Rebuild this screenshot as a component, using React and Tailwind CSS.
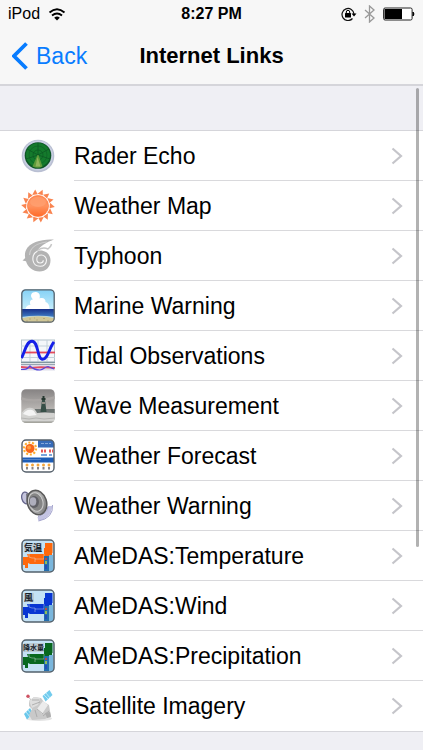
import React from 'react';

const RAYS = [0, 1, 2, 3, 4, 5, 6, 7, 8, 9, 10, 11, 12, 13];

function IconFrame({ children }) {
  return (
    <svg viewBox="0 0 34 34" className="h-[34px] w-[34px] shrink-0" aria-hidden="true">
      {children}
    </svg>
  );
}

function RadarIcon() {
  return (
    <IconFrame>
      <circle cx="17" cy="17" r="16.3" fill="#b9bfd2" />
      <circle cx="17" cy="16.6" r="15" fill="#c9cfe2" />
      <circle cx="17" cy="16.5" r="13.3" fill="#0d5526" />
      <circle cx="17" cy="16" r="12" fill="#147a2c" />
      <path d="M17 16 6 10M17 16l11-6M17 16V4M17 16 5 20M17 16l12 4" stroke="#0b5522" strokeWidth="0.7" />
      <circle cx="17" cy="16" r="5" fill="none" stroke="#0b5a22" strokeWidth="0.7" />
      <circle cx="17" cy="16" r="9" fill="none" stroke="#0b5a22" strokeWidth="0.5" />
      <path d="m16.500 16-5 11.500Q17 30 21.500 27.500L17.500 16Z" fill="#5f9a3a" />
      <path d="m16.500 18-2 9.500h5Z" fill="#8fb45c" />
    </IconFrame>
  );
}

function SunIcon() {
  return (
    <IconFrame>
      <defs>
        <linearGradient id="sun" x1="0" y1="0" x2="0" y2="1">
          <stop offset="0" stopColor="#ff8a55" />
          <stop offset="0.5" stopColor="#ff935f" />
          <stop offset="1" stopColor="#ff6a28" />
        </linearGradient>
      </defs>
      {RAYS.map((n) => (
        <path key={n} d="M14 5 18.200.2 19.500 5.500Z" fill="#f98450" transform={`rotate(${n * 25.714 + 12} 17 17)`} />
      ))}
      <circle cx="17" cy="17" r="10.6" fill="url(#sun)" stroke="#ff7438" strokeWidth="0.6" />
      <ellipse cx="17" cy="13" rx="8" ry="5" fill="#ffae85" opacity="0.4" />
    </IconFrame>
  );
}

function TyphoonIcon() {
  return (
    <IconFrame>
      <path
        d="M33 .5C23 .5 12 2 6.500 8.500 4 12 3.500 15.500 4.200 19L1.500 21.500l3.500.8C6.500 28 12 32.500 18.500 32.500 25 32.500 29.500 28 29.500 21.500c0-3.500-1.500-6.500-4.500-8.500-2.500-1.600-5.500-2-8.500-1.200C19 7 25 3.500 33 .5Z"
        fill="#b3b3b3"
      />
      <path d="M26 3C17 4 9 8 8.500 16" fill="none" stroke="#cfcfcf" strokeWidth="1.200" />
      <path d="M17 11c3-2 7-2.500 10-1 3-2 3-3 3.500-5" fill="none" stroke="#c6c6c6" strokeWidth="1.500" />
      <path
        d="M16.500 12C12.500 14 11.500 18 12 21.500c.7 3.700 3.800 5.800 7.200 5.800 3.800 0 6.300-2.700 6.300-6 0-3-2.300-5.300-5.200-5.300-2.600 0-4.500 1.900-4.500 4.300 0 2.200 1.500 3.700 3.500 3.700 1.800 0 3-1.200 3-2.700"
        fill="none"
        stroke="#f6f6f6"
        strokeWidth="1.100"
      />
    </IconFrame>
  );
}

function MarineIcon() {
  return (
    <IconFrame>
      <defs>
        <clipPath id="marine"><rect x="0.500" y="0.500" width="33" height="33" rx="4" /></clipPath>
        <linearGradient id="sky" x1="0" y1="0" x2="0" y2="1">
          <stop offset="0" stopColor="#82d0f5" />
          <stop offset="1" stopColor="#c8effc" />
        </linearGradient>
        <linearGradient id="sea" x1="0" y1="0" x2="0" y2="1">
          <stop offset="0" stopColor="#17308a" />
          <stop offset="1" stopColor="#3f7cc4" />
        </linearGradient>
      </defs>
      <g clipPath="url(#marine)">
        <rect width="34" height="21" fill="url(#sky)" />
        <path d="M4.500 20c.5-3 3-4.500 5-4C8 12 10 10.500 12 10.500 7.500 6 11.500 2 16 3.200c3.500 1 3 5 2.500 6.300 3.500-1.500 6.500.5 6 3.500 2.500.5 4 3 4 7Z" fill="#fff" />
        <rect y="20" width="34" height="8" fill="url(#sea)" />
        <path d="M0 28q17-2.500 34 0v3H0Z" fill="#b8dbe8" />
        <path d="M0 29.500q17-4.500 34 0V34H0Z" fill="#d0c797" />
        <path d="M8 30h2M15 31h2M22 29.500h2M13 29h1M26 32h2M5 32h2" stroke="#b5a878" />
      </g>
      <rect x="0.800" y="0.800" width="32.400" height="32.400" rx="4" fill="none" stroke="#56616b" strokeWidth="1.300" />
    </IconFrame>
  );
}

function TidalIcon() {
  return (
    <IconFrame>
      <rect x="0.500" y="1" width="33" height="22" fill="#f4f7fa" stroke="#b4c3cc" />
      <path d="M9 1v22M17 1v22M26 1v22M0 7h34M0 18.500h34" stroke="#c3d1da" />
      <path d="M0 23.500h34" stroke="#7f959f" strokeWidth="1.300" />
      <path d="M4 13.500h30" stroke="#e3495c" strokeWidth="1.800" />
      <rect y="25" width="34" height="6.500" fill="#dedeea" />
      <path d="M0 25.500h34" stroke="#97a5b0" />
      <path d="m0 28 10 .8 10-.6 14 .6" fill="none" stroke="#e34d63" strokeWidth="1.800" />
      <path d="M0 30.500c4 0 6 0 9-3.500 3 3 6 4 10 4 4-.5 5-3.500 8-3.500l6 2.500" fill="none" stroke="#5546dc" strokeWidth="1.200" />
      <path d="M.5 19C3.500 14 5 2.200 11 2.200c6.500 0 5 18 10.500 18C27 20.200 28 9 33 3" fill="none" stroke="#1520e8" strokeWidth="2.900" />
    </IconFrame>
  );
}

function WaveIcon() {
  return (
    <IconFrame>
      <defs>
        <clipPath id="wave"><rect x="0.300" y="0.300" width="33.400" height="33.400" rx="4.500" /></clipPath>
        <linearGradient id="storm" x1="0" y1="0" x2="0" y2="1">
          <stop offset="0" stopColor="#858282" />
          <stop offset="0.6" stopColor="#b9b6b3" />
          <stop offset="1" stopColor="#a8a8a6" />
        </linearGradient>
      </defs>
      <g clipPath="url(#wave)">
        <rect width="34" height="34" fill="url(#storm)" />
        <path d="M0 8q12 5 34-1v3q-20 5-34 1Z" fill="#aaa6a4" />
        <path d="M14 20h20v5H12Z" fill="#6a7270" />
        <path d="m21 11-1.500 12h6L24 11Z" fill="#364f47" />
        <path d="M20.500 9h4v2h-4zM21.500 7h2v2h-2z" fill="#25372f" />
        <path d="M21 13h3v2h-3z" fill="#8f8e86" />
        <path d="M0 24c2-1 3-4 7-5 3-1 6 0 8 3l1 2 8-.5 10 .5v10H0Z" fill="#d2d2d0" />
        <path d="M2 25c2-3 5-5 9-4 3 1 3 4 5 5l-8 1Z" fill="#f4f4f4" />
        <path d="m0 29 8 1 7-1 8 1 11-1" fill="none" stroke="#b5b5b3" />
        <path d="M0 33.500h34" stroke="#96968f" strokeWidth="2" />
      </g>
    </IconFrame>
  );
}

function ForecastIcon() {
  return (
    <IconFrame>
      <rect x="1" y="1" width="32" height="32" rx="4" fill="#fff" />
      <path d="M17 1h12q4 0 4 4v3.500H17Z" fill="#376bb8" />
      <path d="M20 4.500h10" stroke="#86a8db" strokeDasharray="3 1" />
      <circle cx="9" cy="9.500" r="6" fill="none" stroke="#ffae2e" strokeWidth="2.200" strokeDasharray="2 1.700" />
      <circle cx="9" cy="9.500" r="4.500" fill="#f86518" />
      <circle cx="8" cy="8.500" r="2" fill="#ff9c42" />
      <path d="M20 12h6M28 12h4" stroke="#e85858" strokeWidth="3" strokeDasharray="2 1" />
      <path d="M20 16h6M28 16h3" stroke="#7aa4db" strokeWidth="2" />
      <rect x="1" y="18.500" width="32" height="5" fill="#1e5db5" />
      <path d="M2 20.500h18" stroke="#5484c8" />
      {[6, 11.5, 17, 22.5, 28].map((x) => (
        <g key={x}>
          <circle cx={x} cy="26" r="1.500" fill="#f5a63b" />
          <path d={`M${x} 28v2.500`} stroke="#8a8382" strokeWidth="2" />
        </g>
      ))}
      <rect x="1" y="1" width="32" height="32" rx="4" fill="none" stroke="#55606b" strokeWidth="1.400" />
    </IconFrame>
  );
}

function SpeakerIcon() {
  return (
    <IconFrame>
      <defs>
        <linearGradient id="cone" x1="0" y1="0" x2="1" y2="1">
          <stop offset="0" stopColor="#6d6d6d" />
          <stop offset="0.5" stopColor="#b5b5b5" />
          <stop offset="1" stopColor="#666" />
        </linearGradient>
      </defs>
      <path d="M29 17q0 10-12 13" fill="none" stroke="#c3c3e2" strokeWidth="4" />
      <path d="M31.500 16q1 13-14 16M27 18q-1 7-10 9.500" fill="none" stroke="#a3a3cc" strokeWidth="1" />
      <ellipse cx="4.800" cy="9" rx="4" ry="6" fill="#c4c4dc" stroke="#65658c" strokeWidth="1.300" transform="rotate(-15 4.800 9)" />
      <path d="m5 5 9-4-1 22-7-7Z" fill="#77777f" />
      <ellipse cx="16" cy="13.500" rx="9.500" ry="12.500" fill="url(#cone)" stroke="#5a5a5a" strokeWidth="1.500" transform="rotate(-18 16 13.500)" />
      <ellipse cx="14.800" cy="13" rx="7" ry="9.500" fill="#858585" stroke="#cfcfcf" transform="rotate(-18 14.800 13)" />
      <ellipse cx="13" cy="13" rx="5" ry="6" fill="#606066" />
      <ellipse cx="12" cy="12.500" rx="3.300" ry="4.200" fill="#aeaebc" />
    </IconFrame>
  );
}

function AmedasIcon({ land, label, labelWidth, size }) {
  return (
    <IconFrame>
      <rect x="1" y="1" width="32" height="32" rx="4" fill="#c4e2f5" />
      <path d="M24 4h7.500v10H31v6h-7v5H9l-2-1v5H4v-3H2v-8h5l-1-3h17V9h1Z" fill={land} />
      <path d="M8 15v3l3 1h3v4M14 20h9v-5" fill="none" stroke="#e3eaf2" strokeOpacity="0.6" strokeWidth="0.700" />
      <path d="M23 17h5v15h-5z" fill="#246dad" />
      <path d="M28 16h4v16h-4z" fill="#7ab6dc" />
      <path d="M25 19v2" stroke="#b94c45" strokeWidth="2" />
      <path d="M25 22v3" stroke="#90bd59" strokeWidth="2" />
      <path d="M25 26v4" stroke="#244fbb" strokeWidth="2" />
      <rect x="3" y="4" width={labelWidth} height="9" fill="#bccbd3" />
      <text x={size > 8 ? 3 : 2} y={size > 8 ? 12 : 11} fontSize={size} className="font-['Noto_Sans_CJK_JP',sans-serif] font-bold" fill="#172129">{label}</text>
      <rect x="1" y="1" width="32" height="32" rx="4" fill="none" stroke="#53616c" strokeWidth="1.500" />
    </IconFrame>
  );
}

function SatelliteIcon() {
  return (
    <IconFrame>
      <ellipse cx="18" cy="29.500" rx="13" ry="2.500" fill="#e4e4e4" />
      <path d="m21.500 7 7-6 3 5-7 6.500Z" fill="#72cbed" />
      <path d="m25 4 4 5M23 6l4 4" stroke="#b8e9fa" />
      <path d="m3 25 6-6 3 5-6 6.500Z" fill="#69c7eb" />
      <path d="m5 23 4 5M7 21l4 5" stroke="#bceafa" />
      <path d="m7.500 8 3.500 4" stroke="#bbb" />
      <circle cx="7" cy="7.200" r="1.700" fill="#cf5363" />
      <path d="m8 12 5-4 7 1 3 4 5 3 1 6 1 5-6 3-13 1-3-5 3-6-3-3Z" fill="#c9c9c9" />
      <path d="m8 12 5-4 6 1-2 7-6 3Z" fill="#dedede" />
      <path d="m16 20 6-8 5 4-6 9Z" fill="#ececec" />
      <path d="m11 11 7 0M11 16l8-3M16 20l6 5M22 27l6-5M14 21l2 7" stroke="#a5a5a5" strokeWidth="0.800" />
      <path d="m24 24 5-1 1 5-4 1Z" fill="#adadad" />
    </IconFrame>
  );
}

const LINKS = [
  { title: 'Rader Echo', icon: <RadarIcon /> },
  { title: 'Weather Map', icon: <SunIcon /> },
  { title: 'Typhoon', icon: <TyphoonIcon /> },
  { title: 'Marine Warning', icon: <MarineIcon /> },
  { title: 'Tidal Observations', icon: <TidalIcon /> },
  { title: 'Wave Measurement', icon: <WaveIcon /> },
  { title: 'Weather Forecast', icon: <ForecastIcon /> },
  { title: 'Weather Warning', icon: <SpeakerIcon /> },
  { title: 'AMeDAS:Temperature', icon: <AmedasIcon land="#ff690c" label="気温" labelWidth={18} size={9} /> },
  { title: 'AMeDAS:Wind', icon: <AmedasIcon land="#0836d3" label="風" labelWidth={10} size={9} /> },
  { title: 'AMeDAS:Precipitation', icon: <AmedasIcon land="#08681f" label="降水量" labelWidth={20} size={7} /> },
  { title: 'Satellite Imagery', icon: <SatelliteIcon /> },
];

function StatusBar() {
  return (
    <div className="grid h-7 grid-cols-3 items-center px-2 text-base leading-5">
      <div className="flex items-center gap-2">
        <span>iPod</span>
        <svg viewBox="0 0 18 13" className="h-[13px] w-[18px]" aria-label="Wi-Fi">
          <path d="M1.500 4.500Q9-2 16.500 4.500M4 7.500q5-4 10 0" fill="none" stroke="#000" strokeWidth="1.900" />
          <path d="M6.200 9.700Q9 7.500 11.800 9.700L9 12.500Z" />
        </svg>
      </div>
      <span className="text-center font-bold">8:27 PM</span>
      <div className="flex items-center justify-end gap-[7px]">
        <svg viewBox="0 0 16 14" className="h-[14px] w-4" aria-label="Rotation lock">
          <path d="M11.500 11.500A6 6 0 1 1 13 7" fill="none" stroke="#111" strokeWidth="1.200" />
          <path d="M10.500 6.500h5L13 9.500Z" />
          <rect x="4" y="6" width="6" height="4.500" rx="0.500" />
          <path d="M5.300 6.500V5a1.700 1.700 0 0 1 3.400 0v1.500" fill="none" stroke="#000" />
        </svg>
        <svg viewBox="0 0 12 18" className="h-[18px] w-3" aria-label="Bluetooth">
          <path d="m1 5 9 8-4.500 4V1L10 5l-9 8" fill="none" stroke="#999" strokeWidth="1.300" />
        </svg>
        <svg viewBox="0 0 32 14" className="h-[14px] w-8" aria-label="Battery">
          <rect x="0.600" y="1" width="28.500" height="12" rx="1.500" fill="#fff" stroke="#222" />
          <rect x="1.500" y="2" width="17.500" height="10" />
          <path d="M30 5q2 2 0 4Z" stroke="#000" />
        </svg>
      </div>
    </div>
  );
}

export default function App() {
  return (
    <div className="relative min-h-screen bg-[#efeff4] font-['Liberation_Sans',Arial,sans-serif] text-black">
      <header className="border-b-2 border-[#d5d5da] bg-[#f7f7f7]">
        <StatusBar />
        <div className="grid h-14 grid-cols-[1fr_auto_1fr] items-center px-3">
          <button type="button" className="flex items-center gap-2 text-[23px] leading-7 text-[#087cff]">
            <svg viewBox="0 0 16 28" className="h-7 w-4" aria-hidden="true">
              <path d="M14.500 1.500 2 14l12.500 12.500" fill="none" stroke="currentColor" strokeWidth="3.800" />
            </svg>
            Back
          </button>
          <h1 className="text-[22px] leading-7 font-bold">Internet Links</h1>
        </div>
      </header>

      <main className="pt-11">
        <ul className="border-y border-[#d5d5da] bg-white">
          {LINKS.map((link) => (
            <li key={link.title} className="group">
              <a href="#" className="flex h-[50px] items-stretch pl-[21px]">
                <span className="flex w-[53px] shrink-0 items-center">{link.icon}</span>
                <span className="flex flex-1 items-center justify-between border-b border-[#d9d9dc] pr-5 group-last:border-b-0">
                  <span className="text-[23px] leading-7">{link.title}</span>
                  <svg viewBox="0 0 12 18" className="h-[18px] w-3" aria-hidden="true">
                    <path d="m1.500 1.500 8.500 7.500-8.500 7.500" fill="none" stroke="#c5c5ca" strokeWidth="2.200" />
                  </svg>
                </span>
              </a>
            </li>
          ))}
        </ul>
      </main>

      <div className="absolute top-[88px] right-1 h-[459px] w-[3px] rounded-full bg-black/30" />
    </div>
  );
}
